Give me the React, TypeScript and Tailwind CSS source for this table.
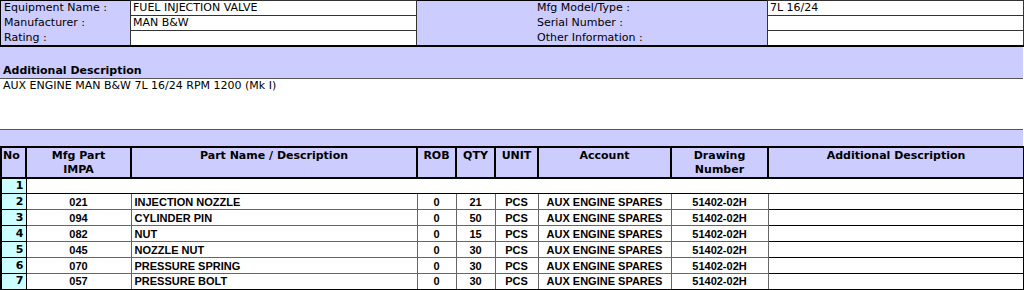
const parts = [
  { no: 2, impa: "021", name: "INJECTION NOZZLE", qty: 21 },
  { no: 3, impa: "094", name: "CYLINDER PIN", qty: 50 },
  { no: 4, impa: "082", name: "NUT", qty: 15 },
  { no: 5, impa: "045", name: "NOZZLE NUT", qty: 30 },
  { no: 6, impa: "070", name: "PRESSURE SPRING", qty: 30 },
  { no: 7, impa: "057", name: "PRESSURE BOLT", qty: 30 },
];

const info = [
  { left: "Equipment Name :", leftVal: "FUEL INJECTION VALVE", right: "Mfg Model/Type :", rightVal: "7L 16/24" },
  { left: "Manufacturer :", leftVal: "MAN B&W", right: "Serial Number :", rightVal: "" },
  { left: "Rating :", leftVal: "", right: "Other Information :", rightVal: "" },
];

export default function App() {
  return (
    <div className="w-[1024px] h-[290px] overflow-hidden bg-white font-['DejaVu_Sans',sans-serif] text-[11px] leading-[14px] text-black">
      <div className="w-[1023px] bg-[#ccccff]">
        {/* equipment header */}
        <table className="w-[1023px] table-fixed border-collapse border-t border-l border-r border-b-2 border-black">
          <colgroup>
            <col className="w-[130px]" />
            <col className="w-[286px]" />
            <col className="w-[351px]" />
            <col className="w-[256px]" />
          </colgroup>
          <tbody>
            {info.map((r) => (
              <tr key={r.left} className="h-[15px]">
                <td className="px-[3px] align-top whitespace-nowrap">{r.left}</td>
                <td className="bg-white border border-[#333] px-[2px] align-top whitespace-nowrap">{r.leftVal}</td>
                <td className="pl-[120px] align-top whitespace-nowrap">{r.right}</td>
                <td className="bg-white border border-[#333] px-[2px] align-top whitespace-nowrap">{r.rightVal}</td>
              </tr>
            ))}
          </tbody>
        </table>

        <div className="h-[16px]" />
        <div className="h-[15px] px-[3px] font-bold leading-[15px]">Additional Description</div>
        <div className="h-[52px] bg-white border-y border-[#555] px-[3px] leading-[14px]">
          AUX ENGINE MAN B&amp;W 7L 16/24 RPM 1200 (Mk I)
        </div>
        <div className="h-[16px]" />

        {/* parts table */}
        <table className="w-[1023px] table-fixed border-collapse border-2 border-black">
          <colgroup>
            <col className="w-[25px]" />
            <col className="w-[105px]" />
            <col className="w-[286px]" />
            <col className="w-[39px]" />
            <col className="w-[39px]" />
            <col className="w-[43px]" />
            <col className="w-[133px]" />
            <col className="w-[97px]" />
            <col className="w-[256px]" />
          </colgroup>
          <thead>
            <tr className="h-[31px] font-bold text-center align-top">
              <th className="border-2 border-black pt-[1px] text-left pl-[1px]">No</th>
              <th className="border-2 border-black pt-[1px]">Mfg Part<br />IMPA</th>
              <th className="border-2 border-black pt-[1px]">Part Name / Description</th>
              <th className="border-2 border-black pt-[1px]">ROB</th>
              <th className="border-2 border-black pt-[1px]">QTY</th>
              <th className="border-2 border-black pt-[1px]">UNIT</th>
              <th className="border-2 border-black pt-[1px]">Account</th>
              <th className="border-2 border-black pt-[1px]">Drawing<br />Number</th>
              <th className="border-2 border-black pt-[1px]">Additional Description</th>
            </tr>
          </thead>
          <tbody className="font-['Liberation_Sans',sans-serif] font-bold text-[11px]">
            <tr className="h-[16px]">
              <td className="bg-[#ccffff] border border-black text-right pr-[2px] font-['DejaVu_Sans',sans-serif]">1</td>
              <td colSpan={8} className="bg-white border border-black" />
            </tr>
            {parts.map((p) => (
              <tr key={p.no} className="h-[16px] bg-white text-center">
                <td className="bg-[#ccffff] border border-black text-right pr-[2px] font-['DejaVu_Sans',sans-serif]">{p.no}</td>
                <td className="border border-[#666]">{p.impa}</td>
                <td className="border border-[#666] text-left pl-[3px]">{p.name}</td>
                <td className="border border-[#666]">0</td>
                <td className="border border-[#666]">{p.qty}</td>
                <td className="border border-[#666]">PCS</td>
                <td className="border border-[#666]">AUX ENGINE SPARES</td>
                <td className="border border-[#666]">51402-02H</td>
                <td className="border border-black" />
              </tr>
            ))}
          </tbody>
        </table>
      </div>
    </div>
  );
}
